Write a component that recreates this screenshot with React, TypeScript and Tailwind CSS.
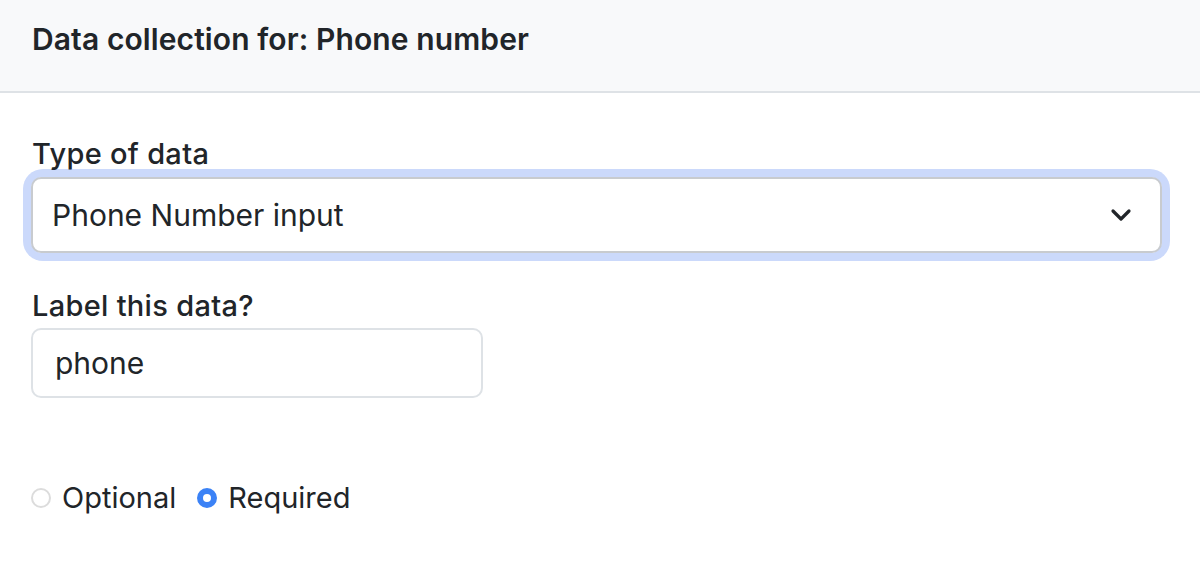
export default function App() {
  return (
    <div className="min-h-[567px] bg-white text-[#212529]" style={{ fontFamily: 'Inter, "Liberation Sans", sans-serif' }}>
      <div className="h-[93px] bg-[#f8f9fa] border-b-2 border-[#dee2e6] flex items-center px-8 pb-[13px]">
        <h1 className="text-[30px] font-semibold leading-none tracking-[0.1px]">Data collection for: Phone number</h1>
      </div>
      <div className="px-8 pt-[42px]">
        <label className="block text-[29px] font-medium leading-[38px] tracking-[0.3px]">Type of data</label>
        <div className="mt-[4px] rounded-[12px] shadow-[0_0_0_8px_#cbd9fb] ml-[-1px] w-[1131px]">
          <div className="h-[76px] flex items-center justify-between rounded-[10px] border-2 border-[#c8cbcf] bg-white pl-[19px] pr-[28px]">
            <span className="text-[30px]">Phone Number input</span>
            <svg width="22" height="14" viewBox="0 0 22 14" fill="none" stroke="#212529" strokeWidth="3.2" strokeLinecap="round" strokeLinejoin="round">
              <path d="M3 3l8 8 8-8" />
            </svg>
          </div>
        </div>
        <label className="block mt-[34px] text-[29px] font-medium leading-[38px] tracking-[0.3px]">Label this data?</label>
        <div className="mt-[3px] ml-[-1px] w-[452px] h-[70px] rounded-[10px] border-2 border-[#dee2e6] flex items-center pl-[22px]">
          <span className="text-[30px]">phone</span>
        </div>
        <div className="mt-[78px] flex items-center text-[29px] ml-[-1px]">
          <span className="w-[20px] h-[20px] rounded-full border-2 border-[#dcdcdc] bg-white" />
          <span className="ml-[11px]">Optional</span>
          <span className="ml-[21px] w-[20px] h-[20px] rounded-full border-[6px] border-[#3b82f6] bg-white" />
          <span className="ml-[11px]">Required</span>
        </div>
      </div>
    </div>
  );
}
